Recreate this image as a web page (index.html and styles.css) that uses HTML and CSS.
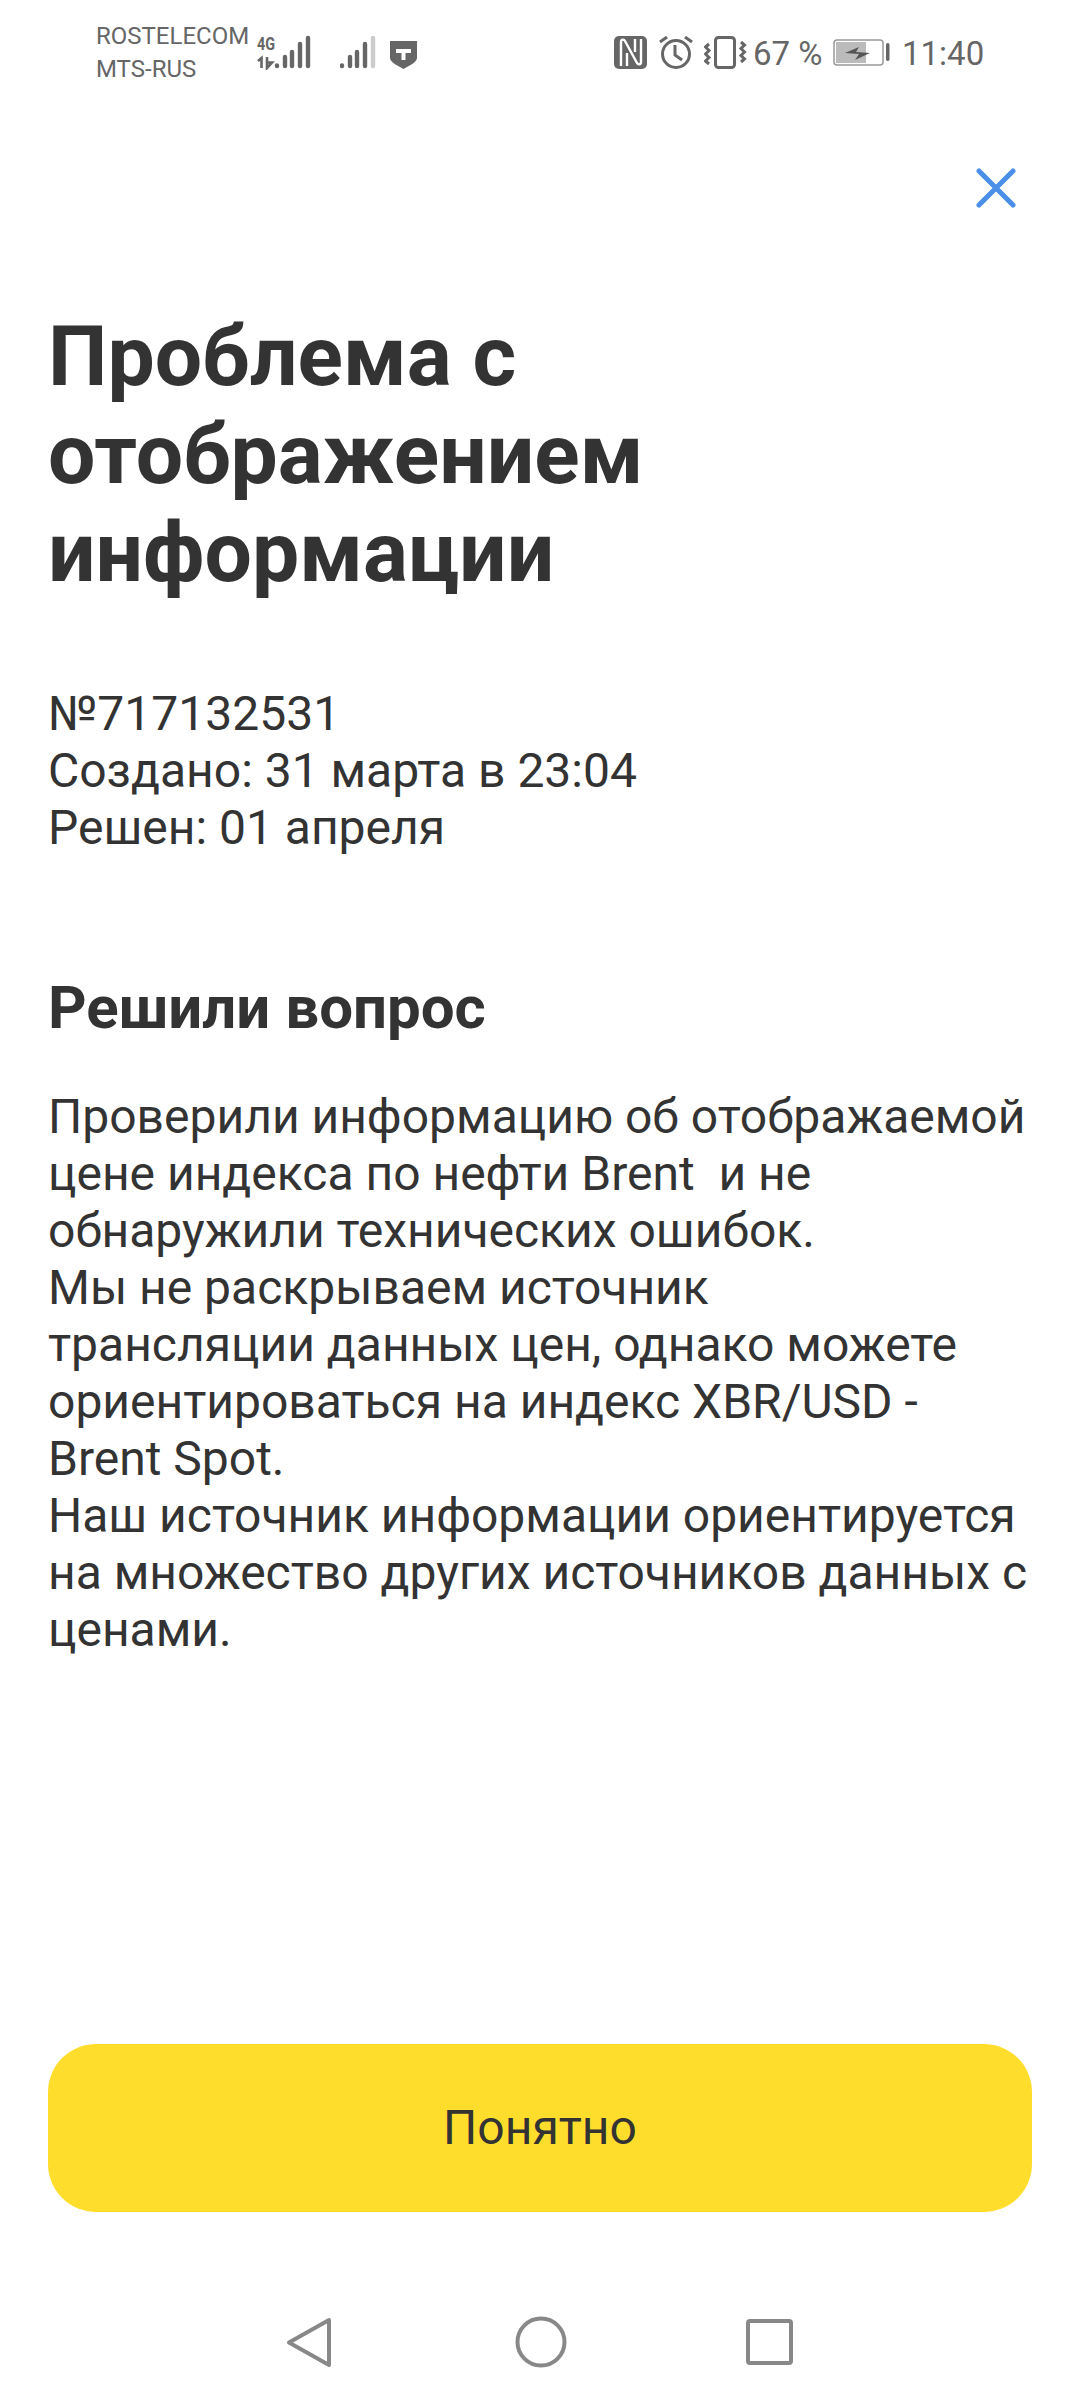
FILE: index.html
```html
<!DOCTYPE html>
<html lang="ru">
<head>
<meta charset="utf-8">
<title>Проблема с отображением информации</title>
<link rel="stylesheet" href="styles.css">
</head>
<body>
<div class="screen">
  <header class="status">
    <div class="carriers"><span>ROSTELECOM</span><span>MTS-RUS</span></div>
    <svg class="sig1" width="56" height="40" viewBox="0 -6 56 40">
      <text x="0" y="14" class="tiny" textLength="18" lengthAdjust="spacingAndGlyphs">4G</text>
      <path d="M4.500 32V22L1 25M10 21v11l5-5.500h-4" stroke="#666" stroke-width="2.600" fill="none"/>
      <g stroke="#666" stroke-width="4.400" stroke-linecap="round">
        <path d="M20 29.500v.5M28 21v9M35 16v14M43 8v22M51 2v28"/>
      </g>
    </svg>
    <svg class="sig2" width="36" height="34" viewBox="0 0 36 34">
      <g stroke="#666" stroke-width="4.400" stroke-linecap="round">
        <path d="M2 29.500v.5M10 21v9M17 16v14M25 8v22"/>
        <path d="M33 2v28" stroke="#ccc"/>
      </g>
    </svg>
    <svg class="shield" width="28" height="28" viewBox="0 0 28 28">
      <path d="M0 0h27v17c0 4-8 8-13.500 11C8 25 0 21 0 17z" fill="#666"/>
      <path d="M6 8h15v4h-5.500v7h-4v-7H6z" fill="#fff"/>
    </svg>
    <svg class="nfc" width="34" height="33" viewBox="0 0 34 33">
      <rect x="0" y="0" width="33" height="33" rx="5" fill="#666"/>
      <path d="M7 30V6c0-3 3-3 4-1l12 22c1 2 4 2 4-1V3" fill="none" stroke="#fff" stroke-width="2.400"/>
      <path d="M13 30V17M21 3v13" fill="none" stroke="#fff" stroke-width="2.400"/>
    </svg>
    <svg class="alarm" width="34" height="33" viewBox="0 0 34 33">
      <circle cx="17" cy="18" r="13.500" fill="none" stroke="#666" stroke-width="3"/>
      <path d="M16 9v10l7 5" fill="none" stroke="#666" stroke-width="3"/>
      <path d="M1 6l7-5M33 6l-7-5" fill="none" stroke="#666" stroke-width="3"/>
    </svg>
    <svg class="vibrate" width="43" height="33" viewBox="0 0 43 33">
      <rect x="11.500" y="1.500" width="19" height="30" rx="3" fill="none" stroke="#666" stroke-width="3"/>
      <path d="M5 8L1.500 11 5 14.500 1.500 18 5 21.500 1.500 25 5 28M37 6l3.500 3L37 12.500 40.500 16 37 19.500 40.500 23 37 26" fill="none" stroke="#666" stroke-width="3"/>
    </svg>
    <span class="pct">67 %</span>
    <svg class="batt" width="57" height="27" viewBox="0 0 57 27">
      <rect x="1" y="1" width="49" height="25" rx="3" fill="#fff" stroke="#999" stroke-width="1.500"/>
      <rect x="3" y="3" width="30" height="21" fill="#bbb"/>
      <path d="M12 14l14-6-3 5 14 1-15 7 4-6z" fill="#555"/>
      <rect x="53" y="4" width="3.500" height="18" rx="1.700" fill="#666"/>
    </svg>
    <span class="time">11:40</span>
  </header>

  <main class="content">
    <div class="close-row">
      <svg class="close" width="40" height="40" viewBox="0 0 40 40">
        <path d="M3 3l34 34M37 3L3 37" stroke="#4a8fe8" stroke-width="5" stroke-linecap="round"/>
      </svg>
    </div>
    <h1 class="title">Проблема с отображением информации</h1>
    <p class="meta">№717132531<br>Создано: 31 марта в 23:04<br>Решен: 01 апреля</p>
    <h2 class="subtitle">Решили вопрос</h2>
    <p class="body">Проверили информацию об отображаемой цене индекса по нефти Brent&nbsp; и не обнаружили технических ошибок.<br>Мы не раскрываем источник<br>трансляции данных цен, однако можете ориентироваться на индекс XBR/USD - Brent Spot.<br>Наш источник информации ориентируется на множество других источников данных с ценами.</p>
  </main>

  <div class="action"><button class="btn">Понятно</button></div>

  <nav class="navbar">
    <svg class="nav-back" width="50" height="52" viewBox="0 0 50 52">
      <path d="M43 4L3 26.500 43 49z" fill="none" stroke="#888" stroke-width="4" stroke-linejoin="round"/>
    </svg>
    <svg class="nav-home" width="52" height="52" viewBox="0 0 52 52">
      <circle cx="26" cy="26" r="23.500" fill="none" stroke="#888" stroke-width="4"/>
    </svg>
    <svg class="nav-recent" width="48" height="52" viewBox="0 0 48 52">
      <rect x="2" y="5" width="43" height="42" rx="2" fill="none" stroke="#888" stroke-width="4"/>
    </svg>
  </nav>
</div>
</body>
</html>
```

FILE: styles.css
```css
* { box-sizing: border-box; }
html, body { margin: 0; padding: 0; background: #fff; }
.screen {
  width: 1080px;
  height: 2400px;
  display: flex;
  flex-direction: column;
  font-family: Roboto, "Noto Sans", sans-serif;
  color: #333;
}
.status {
  height: 104px;
  padding: 20px 0 0 96px;
  display: flex;
  align-items: flex-start;
  color: #666;
}
.carriers {
  display: flex;
  flex-direction: column;
  width: 161px;
  font-size: 24px;
  line-height: 33px;
}
.tiny { font: 700 19px Roboto, sans-serif; fill: #666; }
.sig1 { margin-top: 10px; }
.sig2 { margin: 16px 0 0 27px; }
.shield { margin: 21px 0 0 14px; }
.nfc { margin: 16px 0 0 196px; }
.alarm { margin: 16px 0 0 11px; }
.vibrate { margin: 16px 0 0 11px; }
.pct { margin: 14px 0 0 6px; font-size: 33px; line-height: 40px; width: 74px; white-space: nowrap; flex: 0 0 80px; }
.batt { margin: 19px 0 0 0; }
.time { margin: 14px 0 0 12px; font-size: 33px; line-height: 40px; }
.content { flex: 1; padding: 0 48px; }
.close-row { display: flex; justify-content: flex-end; padding: 64px 16px 0 0; }
.title {
  margin: 100px 0 0;
  width: 760px;
  font-size: 84px;
  line-height: 98px;
  font-weight: 700;
}
.meta, .body { margin: 0; font-size: 48px; line-height: 57px; }
.meta { margin-top: 83px; }
.subtitle { margin: 116px 0 0; font-size: 60px; line-height: 72px; font-weight: 700; }
.body { margin-top: 44px; }
.action { padding: 0 48px; }
.btn {
  display: block;
  width: 984px;
  height: 168px;
  padding: 0 0 2px;
  border: 0;
  border-radius: 48px;
  background: #ffdd2d;
  color: #333;
  font: 400 48px Roboto, sans-serif;
}
.navbar {
  height: 188px;
  padding: 104px 0 0 286px;
  display: flex;
  align-items: flex-start;
  gap: 179px;
}
```
